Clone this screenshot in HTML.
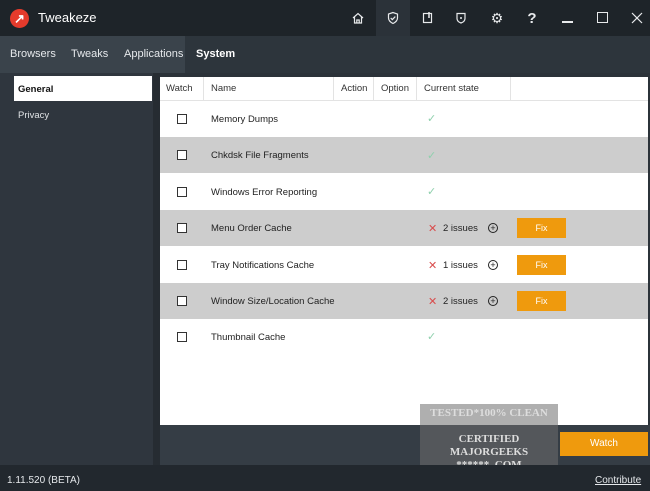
<!DOCTYPE html>
<html><head><style>
*{margin:0;padding:0;box-sizing:border-box}
body{width:650px;height:491px;overflow:hidden;font-family:"Liberation Sans",sans-serif;background:#2b3239;position:relative;font-size:10px}
.a{position:absolute}
.title{left:0;top:0;width:650px;height:36px;background:#1e2429}
.tabs{left:0;top:36px;width:650px;height:37px;background:#2d353c}
.tabl{left:0;top:36px;width:185px;height:37px;background:#3a434b}
.tab{top:48px;color:#e6e9ec;font-size:11px}
.icon{top:10px;color:#e8eaec;font-size:14px;text-align:center;width:20px}
.side{left:0;top:73px;width:153px;height:392px;background:#2f363e}
.gap{left:153px;top:73px;width:7px;height:392px;background:#262c32}
.main{left:160px;top:77px;width:488px;height:348px;background:#fff}
.bot{left:160px;top:425px;width:490px;height:40px;background:#353d45}
.status{left:0;top:465px;width:650px;height:26px;background:#22282e}
.hd{top:77px;height:24px;border-right:1px solid #e3e3e3;border-bottom:1px solid #e3e3e3;color:#333;padding:6px 0 0 7px;font-size:9.5px}
.row{left:160px;width:488px;height:36px}
.g{background:#cdcdcd}
.cb{left:177px;width:10px;height:10px;border:1px solid #333;background:#fff}
.nm{left:211px;color:#222;font-size:9.5px}
.ok{left:427px;color:#8fd0ad;font-size:11px}
.x{left:428px;color:#d94c4c;font-size:11px}
.is{left:443px;color:#222;font-size:9.5px}
.pl{left:488px;width:10px;height:10px;border:1px solid #222;border-radius:50%;font-size:9px;line-height:8px;text-align:center;color:#222}
.fix{left:517px;width:49px;height:20px;background:#ef9a0d;color:#fff;font-size:9px;text-align:center;line-height:20px}
</style></head><body>
<div class="a title"></div>
<div class="a" style="left:10px;top:9px;width:19px;height:19px;border-radius:50%;background:#e53b2c;color:#fff;font-size:13px;font-weight:bold;line-height:19px;text-align:center">↗</div>
<div class="a" style="left:38px;top:10px;color:#fff;font-size:13px">Tweakeze</div>
<div class="a" style="left:376px;top:0;width:34px;height:36px;background:#2b3239"></div>
<svg class="a" style="left:351px;top:11px" width="14" height="14" viewBox="0 0 14 14"><path d="M2 7L7 2.5 12 7M3.5 6v6h7V6M5.8 12V9h2.4v3" fill="none" stroke="#e8eaec" stroke-width="1.2"/></svg>
<svg class="a" style="left:386px;top:11px" width="14" height="14" viewBox="0 0 14 14"><path d="M7 1.5L2.5 3v4c0 3 2.5 4.5 4.5 5.5 2-1 4.5-2.5 4.5-5.5V3z" fill="none" stroke="#e8eaec" stroke-width="1.2"/><path d="M4.7 7l1.6 1.6 3-3" fill="none" stroke="#e8eaec" stroke-width="1.2"/></svg>
<svg class="a" style="left:421px;top:11px" width="14" height="14" viewBox="0 0 14 14"><rect x="2.5" y="2.5" width="8" height="9" fill="none" stroke="#e8eaec" stroke-width="1.2"/><path d="M8 1v6" stroke="#e8eaec" stroke-width="1.5"/></svg>
<svg class="a" style="left:454px;top:11px" width="14" height="14" viewBox="0 0 14 14"><path d="M3 2.5h8v5c0 2.5-2 3.8-4 4.5-2-.7-4-2-4-4.5z" fill="none" stroke="#e8eaec" stroke-width="1.2"/><circle cx="7" cy="7" r="1" fill="#e8eaec"/></svg>
<div class="a icon" style="left:487px">⚙</div>
<div class="a icon" style="left:522px;font-weight:bold;font-size:15px">?</div>
<div class="a" style="left:562px;top:21px;width:11px;height:1.5px;background:#e8eaec"></div>
<div class="a" style="left:597px;top:12px;width:11px;height:11px;border:1.2px solid #e8eaec"></div>
<svg class="a" style="left:631px;top:12px" width="12" height="12" viewBox="0 0 12 12"><path d="M1 1L11 11M11 1L1 11" stroke="#e8eaec" stroke-width="1.2"/></svg>
<div class="a tabs"></div><div class="a tabl"></div>
<div class="a tab" style="left:10px">Browsers</div>
<div class="a tab" style="left:71px">Tweaks</div>
<div class="a tab" style="left:124px">Applications</div>
<div class="a tab" style="left:196px;font-weight:bold;color:#fff">System</div>
<div class="a side"></div><div class="a gap"></div>
<div class="a" style="left:14px;top:76px;width:138px;height:25px;background:#fff;font-weight:bold;color:#111;padding:8px 0 0 4px;font-size:9.5px">General</div>
<div class="a" style="left:18px;top:110px;color:#e0e3e6;font-size:9.5px">Privacy</div>
<div class="a main"></div>
<div class="a hd" style="left:160px;width:44px;padding-left:6px">Watch</div>
<div class="a hd" style="left:204px;width:130px">Name</div>
<div class="a hd" style="left:334px;width:40px">Action</div>
<div class="a hd" style="left:374px;width:43px">Option</div>
<div class="a hd" style="left:417px;width:94px">Current state</div>
<div class="a" style="left:511px;top:100px;width:137px;height:1px;background:#e3e3e3"></div>
<div class="a row g" style="top:137px"></div>
<div class="a row g" style="top:210px"></div>
<div class="a row g" style="top:283px"></div>
<div class="a cb" style="top:114px"></div><div class="a nm" style="top:114px">Memory Dumps</div><div class="a ok" style="top:112px">✓</div>
<div class="a cb" style="top:150px"></div><div class="a nm" style="top:150px">Chkdsk File Fragments</div><div class="a ok" style="top:149px">✓</div>
<div class="a cb" style="top:187px"></div><div class="a nm" style="top:187px">Windows Error Reporting</div><div class="a ok" style="top:185px">✓</div>
<div class="a cb" style="top:223px"></div><div class="a nm" style="top:223px">Menu Order Cache</div><div class="a x" style="top:222px">✕</div><div class="a is" style="top:223px">2 issues</div><div class="a pl" style="top:223px">+</div><div class="a fix" style="top:218px">Fix</div>
<div class="a cb" style="top:260px"></div><div class="a nm" style="top:260px">Tray Notifications Cache</div><div class="a x" style="top:259px">✕</div><div class="a is" style="top:260px">1 issues</div><div class="a pl" style="top:260px">+</div><div class="a fix" style="top:255px">Fix</div>
<div class="a cb" style="top:296px"></div><div class="a nm" style="top:296px">Window Size/Location Cache</div><div class="a x" style="top:295px">✕</div><div class="a is" style="top:296px">2 issues</div><div class="a pl" style="top:296px">+</div><div class="a fix" style="top:291px">Fix</div>
<div class="a cb" style="top:332px"></div><div class="a nm" style="top:332px">Thumbnail Cache</div><div class="a ok" style="top:330px">✓</div>
<div class="a bot"></div>
<div class="a" style="left:420px;top:404px;width:138px;height:80px;overflow:hidden;background:rgba(110,110,110,0.55);color:#ddd;font-family:'Liberation Serif',serif;font-weight:bold;font-size:11px;text-align:center;line-height:13px;padding-top:3px">TESTED*100% CLEAN<br><br>CERTIFIED<br>MAJORGEEKS<br>****** .COM</div>
<div class="a" style="left:560px;top:432px;width:88px;height:24px;background:#ef9a0d;color:#fff;font-size:10px;text-align:center;line-height:24px">Watch</div>
<div class="a status"></div>
<div class="a" style="left:7px;top:475px;color:#e6e9ec;font-size:10px">1.11.520 (BETA)</div>
<div class="a" style="left:595px;top:475px;color:#e6e9ec;font-size:10px;text-decoration:underline">Contribute</div>
</body></html>
